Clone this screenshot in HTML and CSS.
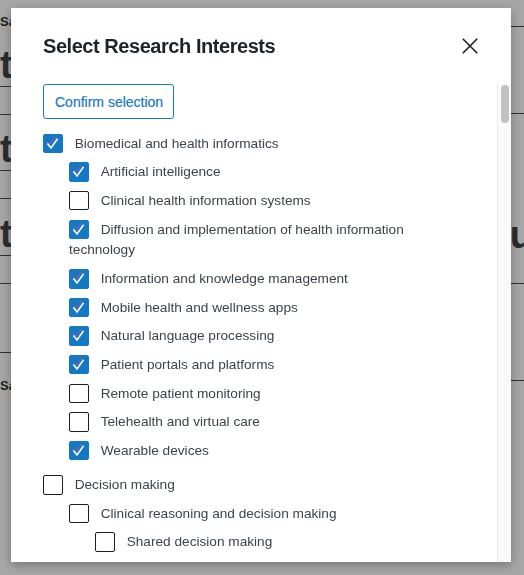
FILE: index.html
```html
<!DOCTYPE html>
<html lang="en">
<head>
<meta charset="utf-8">
<title>Select Research Interests</title>
<link rel="stylesheet" href="styles.css">
</head>
<body>
<div class="page">
  <div class="bg-left">
    <div class="bg-label">Save</div>
    <div class="bg-title-row"><span class="bg-title">test</span></div>
    <div class="bg-row"></div>
    <div class="bg-title-row tall"><span class="bg-title">test</span></div>
    <div class="bg-row"></div>
    <div class="bg-title-row tall2"><span class="bg-title">test</span></div>
    <div class="bg-row"></div>
    <div class="bg-row big"></div>
    <div class="bg-label second">Save</div>
  </div>
  <div class="bg-right">
    <div class="bg-rrow r1"></div>
    <div class="bg-rrow r2"></div>
    <div class="bg-rrow r3"><span class="bg-title">Set up</span></div>
    <div class="bg-rrow r4"></div>
  </div>
</div>

<div class="backdrop">
  <div class="modal" role="dialog" aria-labelledby="modal-title">
    <div class="modal-header">
      <h2 class="modal-title" id="modal-title">Select Research Interests</h2>
      <button class="close" aria-label="Close">
        <svg viewBox="0 0 24 24" width="24" height="24"><path d="M4.8 4.8 L19.2 19.2 M19.2 4.8 L4.8 19.2" stroke="#1e1e1e" stroke-width="1.6" fill="none"/></svg>
      </button>
    </div>
    <div class="modal-body">
      <div class="scroll-content">
        <button class="confirm">Confirm selection</button>
        <ul class="tree root">
          <li class="node">
            <label class="item"><span class="cb on"><svg viewBox="1 1 17.5 17.5"><path class="ck-shadow" d="M4 7.2 L6.6 10.6 L12.6 3"/><path class="ck" d="M4.4 9.6 L8 14 L14.6 4.8"/></svg></span>Biomedical and health informatics</label>
            <ul class="tree">
              <li class="node"><label class="item"><span class="cb on"><svg viewBox="1 1 17.5 17.5"><path class="ck-shadow" d="M4 7.2 L6.6 10.6 L12.6 3"/><path class="ck" d="M4.4 9.6 L8 14 L14.6 4.8"/></svg></span>Artificial intelligence</label></li>
              <li class="node"><label class="item"><span class="cb"></span>Clinical health information systems</label></li>
              <li class="node"><label class="item"><span class="cb on"><svg viewBox="1 1 17.5 17.5"><path class="ck-shadow" d="M4 7.2 L6.6 10.6 L12.6 3"/><path class="ck" d="M4.4 9.6 L8 14 L14.6 4.8"/></svg></span>Diffusion and implementation of health information technology</label></li>
              <li class="node"><label class="item"><span class="cb on"><svg viewBox="1 1 17.5 17.5"><path class="ck-shadow" d="M4 7.2 L6.6 10.6 L12.6 3"/><path class="ck" d="M4.4 9.6 L8 14 L14.6 4.8"/></svg></span>Information and knowledge management</label></li>
              <li class="node"><label class="item"><span class="cb on"><svg viewBox="1 1 17.5 17.5"><path class="ck-shadow" d="M4 7.2 L6.6 10.6 L12.6 3"/><path class="ck" d="M4.4 9.6 L8 14 L14.6 4.8"/></svg></span>Mobile health and wellness apps</label></li>
              <li class="node"><label class="item"><span class="cb on"><svg viewBox="1 1 17.5 17.5"><path class="ck-shadow" d="M4 7.2 L6.6 10.6 L12.6 3"/><path class="ck" d="M4.4 9.6 L8 14 L14.6 4.8"/></svg></span>Natural language processing</label></li>
              <li class="node"><label class="item"><span class="cb on"><svg viewBox="1 1 17.5 17.5"><path class="ck-shadow" d="M4 7.2 L6.6 10.6 L12.6 3"/><path class="ck" d="M4.4 9.6 L8 14 L14.6 4.8"/></svg></span>Patient portals and platforms</label></li>
              <li class="node"><label class="item"><span class="cb"></span>Remote patient monitoring</label></li>
              <li class="node"><label class="item"><span class="cb"></span>Telehealth and virtual care</label></li>
              <li class="node"><label class="item"><span class="cb on"><svg viewBox="1 1 17.5 17.5"><path class="ck-shadow" d="M4 7.2 L6.6 10.6 L12.6 3"/><path class="ck" d="M4.4 9.6 L8 14 L14.6 4.8"/></svg></span>Wearable devices</label></li>
            </ul>
          </li>
          <li class="node">
            <label class="item"><span class="cb"></span>Decision making</label>
            <ul class="tree">
              <li class="node">
                <label class="item"><span class="cb"></span>Clinical reasoning and decision making</label>
                <ul class="tree">
                  <li class="node"><label class="item"><span class="cb"></span>Shared decision making</label></li>
                </ul>
              </li>
            </ul>
          </li>
        </ul>
      </div>
      <div class="scrollbar" aria-hidden="true"><div class="thumb"></div></div>
    </div>
  </div>
</div>
</body>
</html>
```
FILE: styles.css
```css
* {
  box-sizing: border-box;
}

html, body {
  margin: 0;
  width: 524px;
  height: 575px;
  overflow: hidden;
}

body {
  font-family: "Liberation Sans", Arial, sans-serif;
  background: #ffffff;
  color: #1d2327;
}

/* ---------- background page ---------- */
.page {
  display: flex;
}

.bg-left {
  width: 220px;
  flex: none;
}

.bg-right {
  flex: 1;
}

.bg-label {
  font-size: 13px;
  font-weight: 700;
  line-height: 14px;
  color: #333;
  padding-top: 15px;
}

.bg-label.second {
  padding-top: 26px;
}

.bg-title-row {
  height: 58px;
  display: flex;
  align-items: flex-end;
  padding-bottom: 2px;
  border-bottom: 1px solid #4a4a4a;
}

.bg-title-row.tall {
  height: 56px;
}

.bg-title-row.tall2 {
  height: 57px;
}

.bg-title {
  font-size: 38px;
  font-weight: 700;
  line-height: 38px;
  color: #444;
  white-space: nowrap;
}

.bg-row {
  height: 28px;
  border-bottom: 1px solid #4a4a4a;
}

.bg-row.big {
  height: 69px;
}

.bg-rrow {
  border-bottom: 1px solid #4a4a4a;
  padding-left: 220px;
}

.bg-rrow.r1 { height: 27px; }
.bg-rrow.r2 { height: 87px; }
.bg-rrow.r3 { height: 170px; padding-top: 102px; }
.bg-rrow.r4 { height: 97px; }

/* ---------- modal ---------- */
.backdrop {
  position: fixed;
  inset: 0;
  background: rgba(0, 0, 0, 0.35);
  padding: 8px 0 0 11px;
}

.modal {
  width: 500px;
  height: 554px;
  background: #ffffff;
  display: flex;
  flex-direction: column;
  box-shadow: 0 3px 10px rgba(0, 0, 0, 0.3);
}

.modal-header {
  flex: none;
  height: 76px;
  display: flex;
  align-items: center;
  justify-content: space-between;
  padding: 24px 29px 24px 32px;
}

.modal-title {
  margin: 0;
  font-size: 20px;
  letter-spacing: -0.45px;
  line-height: 28px;
  font-weight: 700;
  color: #1d2327;
}

.close {
  width: 24px;
  height: 24px;
  padding: 0;
  border: 0;
  background: none;
  display: flex;
}

.modal-body {
  flex: 1;
  min-height: 0;
  display: flex;
}

.scroll-content {
  flex: 1;
  min-width: 0;
  overflow: hidden;
  padding: 0 32px;
}

.scrollbar {
  flex: none;
  width: 14px;
  background: #fafafa;
  border-left: 1px solid #e8e8e8;
  padding: 1px 2.3px 0 3px;
}

.thumb {
  height: 37.7px;
  background: #c1c1c1;
  border-radius: 4px;
}

.confirm {
  display: block;
  height: 35px;
  padding: 0 10px 0 11px;
  border: 1px solid #1a78c2;
  border-radius: 3px;
  background: #ffffff;
  color: #1a78c2;
  font-family: "Liberation Sans", Arial, sans-serif;
  font-size: 14px;
  -webkit-text-stroke: 0.2px #1a78c2;
  margin: 0 0 14.7px 0;
}

/* ---------- tree ---------- */
.tree {
  list-style: none;
  margin: 0;
  padding: 0 0 0 26px;
}

.tree.root {
  padding-left: 0;
}

.root > .node + .node {
  padding-top: 5.7px;
}

.item {
  display: block;
  font-size: 13.65px;
  line-height: 20.75px;
  color: #3c434a;
  margin-bottom: 7.9px;
}

.cb {
  display: inline-block;
  vertical-align: top;
  width: 19.5px;
  height: 19.5px;
  margin-right: 12.2px;
  border: 1px solid #1e1e1e;
  border-radius: 2px;
  background: #ffffff;
}

.cb.on {
  background: #1479c4;
  border-color: #1479c4;
}

.cb svg {
  display: block;
  width: 100%;
  height: 100%;
}

.ck {
  fill: none;
  stroke: #ffffff;
  stroke-width: 1.6;
}

.ck-shadow {
  fill: none;
  stroke: #8b5aa8;
  stroke-width: 1.4;
  opacity: 0.8;
}
```
